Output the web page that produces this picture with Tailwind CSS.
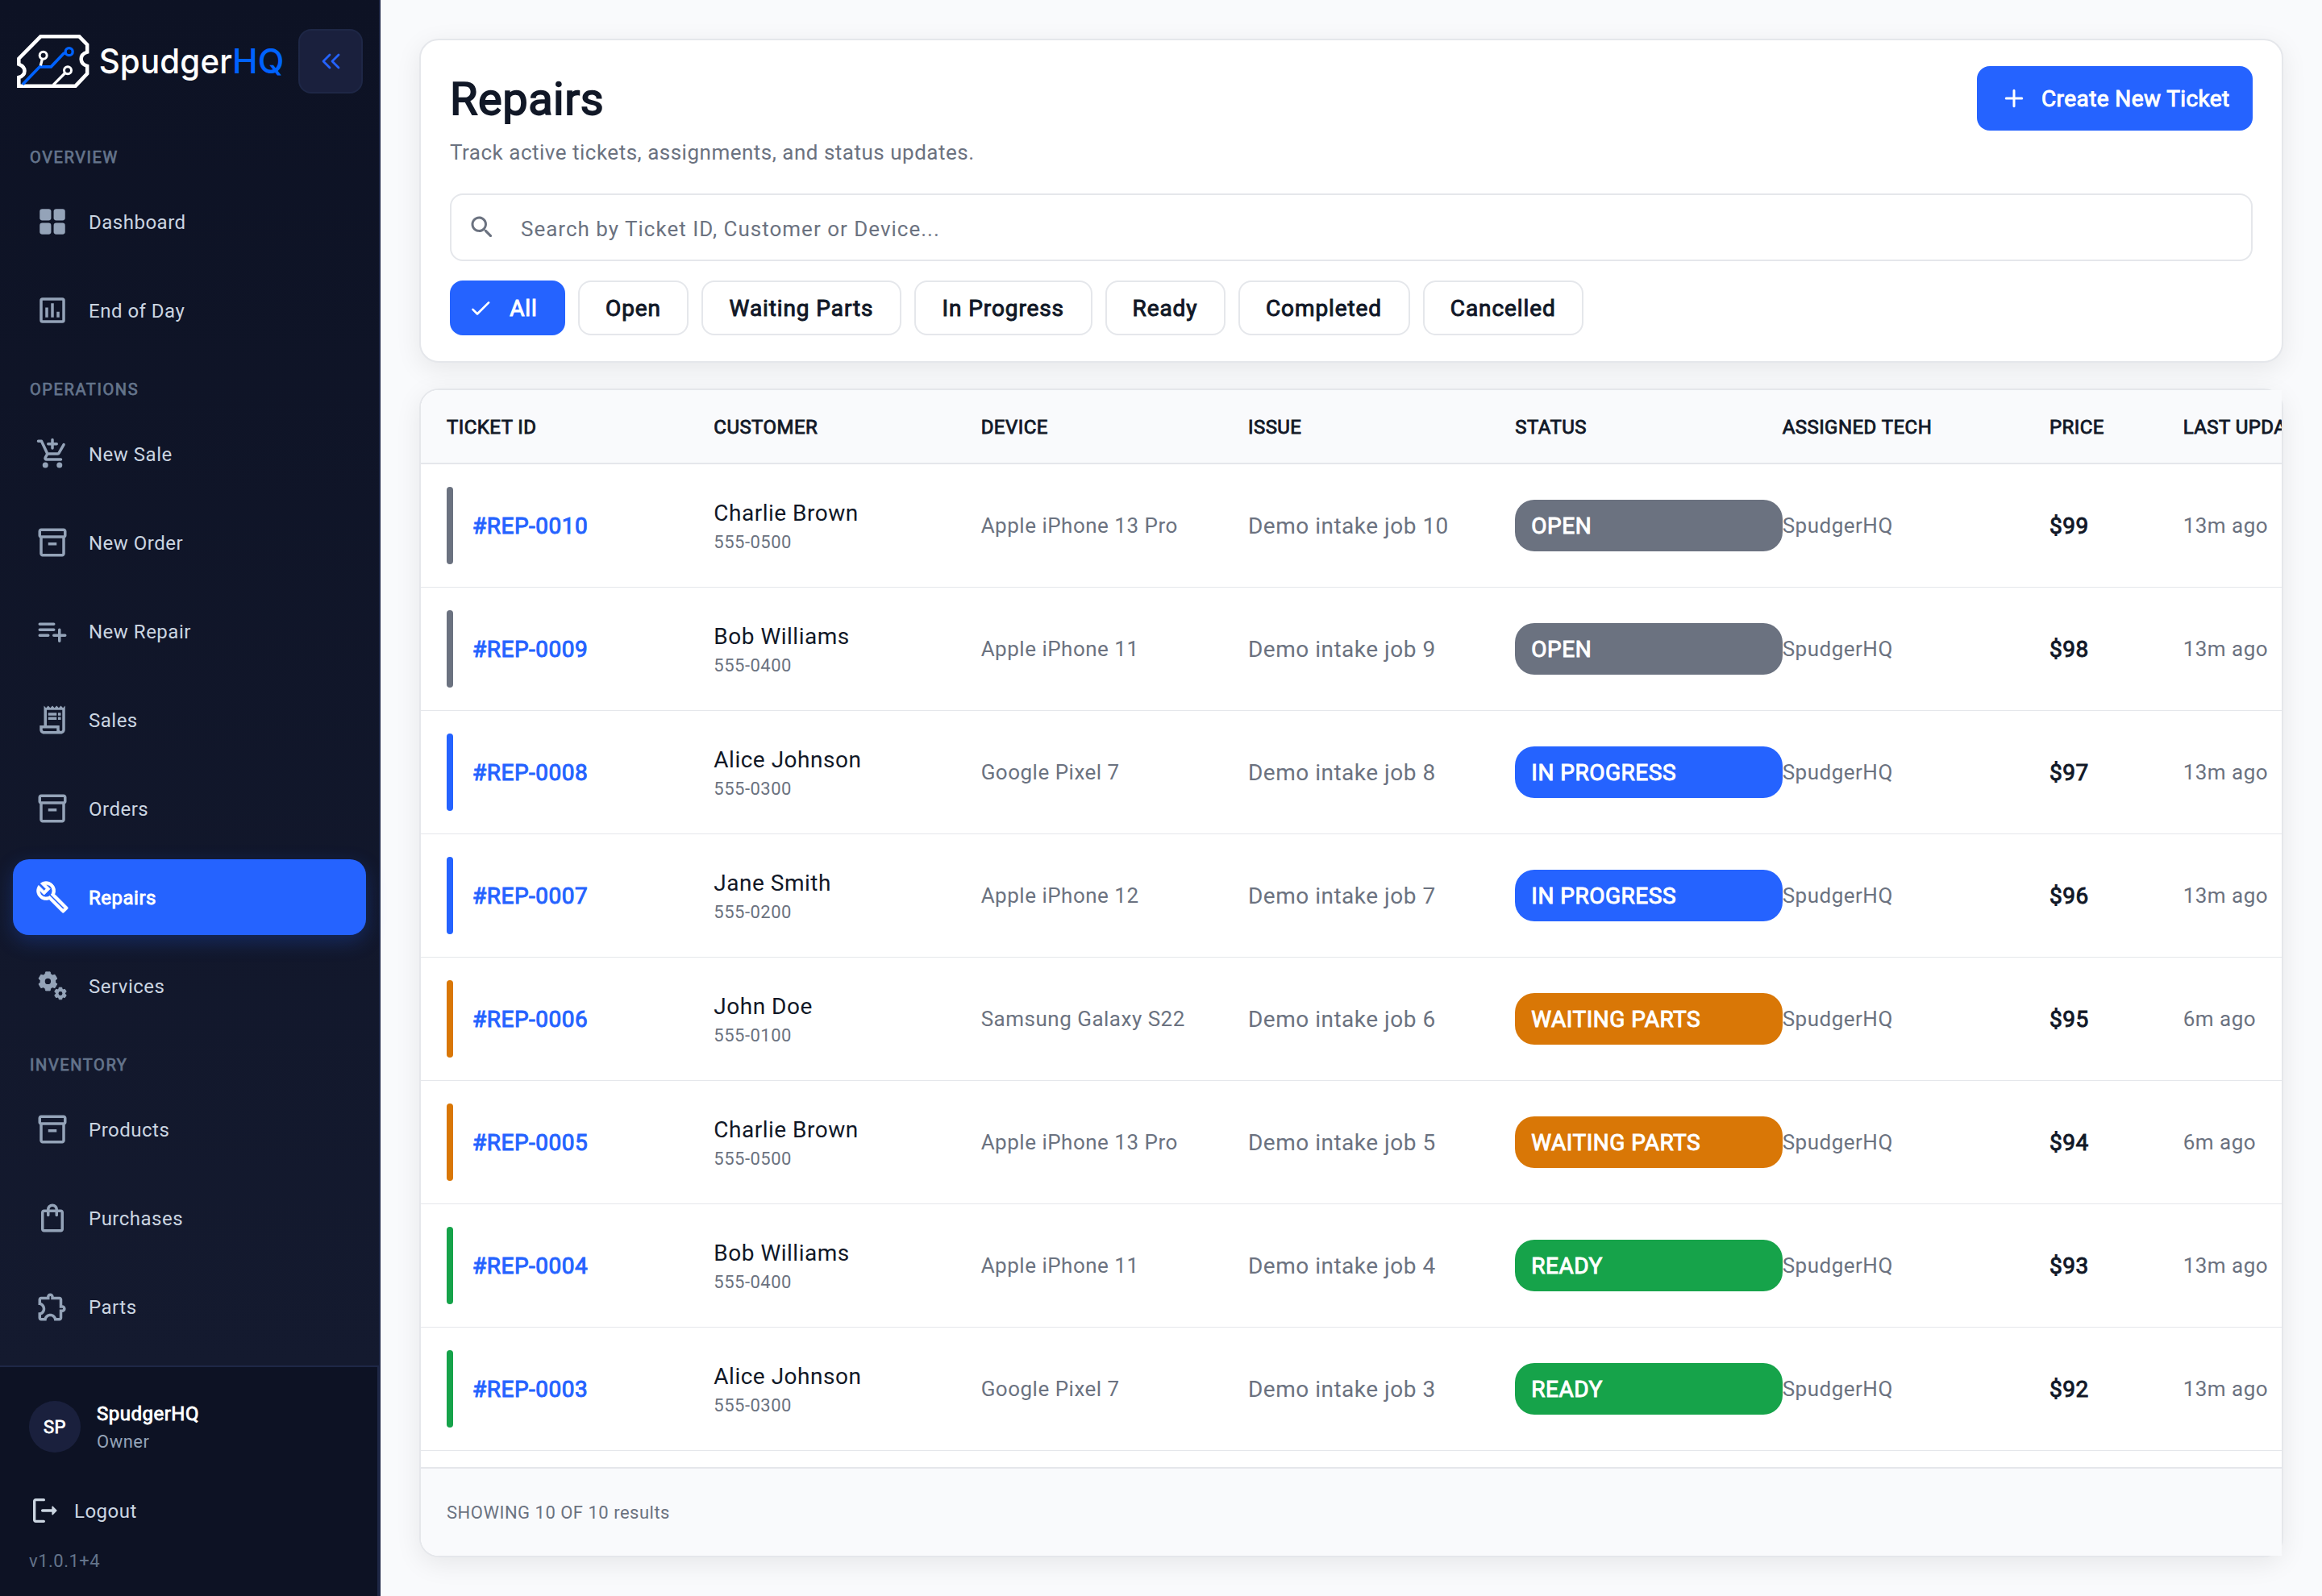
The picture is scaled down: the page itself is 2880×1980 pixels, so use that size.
<!DOCTYPE html>
<html lang="en">
<head>
<meta charset="utf-8">
<title>SpudgerHQ – Repairs</title>
<script src="https://cdn.jsdelivr.net/npm/@tailwindcss/browser@4"></script>
</head>
<body class="flex h-[1980px] w-[2880px] overflow-hidden bg-[#f9fafc] font-[Roboto,sans-serif] tracking-[0.5px] text-[#111827]">

<aside class="flex h-full w-[472px] shrink-0 flex-col border-r-2 border-[#1e2746] bg-[#0d1224]">
  <div class="flex min-h-0 flex-1 flex-col bg-linear-to-b from-[#0d1224] to-[#141a2f]">
    <div class="flex h-[152px] items-start justify-between pt-9 pr-5 pl-5">
      <svg class="mt-[3px] h-[72px] w-[334px] overflow-visible" viewBox="60 57 1002 216" fill="none">
        <path d="M151 76H295L324.500 106V134C308 139 302 148 302 160S308 181 324.500 186V214L281 260H70V228C84 224 91.500 216 91.500 204S84 185 70 179V158Z" stroke="#fff" stroke-width="13.500"/>
        <path d="M84 254L148 188.500H190L237 139L245 137" stroke="#0062ff" stroke-width="11"/>
        <circle cx="257" cy="132.500" r="13.500" stroke="#0062ff" stroke-width="10"/>
        <path d="M157 161L151 184M241 213L198 256" stroke="#fff" stroke-width="10"/>
        <circle cx="161" cy="146" r="13.500" stroke="#fff" stroke-width="9"/>
        <circle cx="252" cy="202" r="13.500" stroke="#fff" stroke-width="9"/>
        <text x="368" y="214" fill="#fff" font-family="Inter, sans-serif" font-weight="500" font-size="128" textLength="496" lengthAdjust="spacingAndGlyphs">Spudger</text>
        <text x="864" y="214" fill="#0062ff" font-family="Inter, sans-serif" font-weight="500" font-size="128" textLength="194" lengthAdjust="spacingAndGlyphs">HQ</text>
      </svg>
      <button class="flex size-20 items-center justify-center rounded-2xl border-2 border-[#1e2746] bg-[#1a203d]">
        <svg class="size-10" viewBox="0 0 40 40" fill="none" stroke="#2563ff" stroke-width="2.800" stroke-linecap="round" stroke-linejoin="round"><path d="M19 12l-8 8 8 8M30 12l-8 8 8 8"/></svg>
      </button>
    </div>
    <nav id="nav" class="flex flex-col"></nav>
  </div>

  <div class="h-[286px] border-t-2 border-r-2 border-[#1e2746] bg-[#0d1224] pt-10 pl-9">
    <div class="flex h-[68px] items-center gap-5">
      <div class="flex size-16 items-center justify-center rounded-full bg-[#1a203d] text-[22px] text-white [-webkit-text-stroke:0.8px_currentColor]">SP</div>
      <div>
        <div class="text-2xl leading-9 text-white [-webkit-text-stroke:0.87px_currentColor]">SpudgerHQ</div>
        <div class="pt-px text-[22px] leading-8 text-[#94a3b8]">Owner</div>
      </div>
    </div>
    <div class="mt-[50px] flex h-10 items-center gap-4 text-2xl text-[#cbd5e1]">
      <svg class="size-10" viewBox="0 0 24 24" fill="currentColor"><path d="M5 5h6c.55 0 1-.45 1-1s-.45-1-1-1H5c-1.1 0-2 .9-2 2v14c0 1.100.9 2 2 2h6c.55 0 1-.45 1-1s-.45-1-1-1H5V5z"/><path d="M20.650 11.650l-2.790-2.790c-.32-.32-.86-.1-.86.35V11h-7c-.55 0-1 .45-1 1s.45 1 1 1h7v1.790c0 .45.54.67.85.35l2.790-2.790c.2-.19.2-.51.010-.7z"/></svg>
      <span class="pt-0.5">Logout</span>
    </div>
    <div class="mt-[27px] text-[22px] leading-8 text-[#64748b]">v1.0.1+4</div>
  </div>
</aside>

<main class="flex min-w-0 flex-1 flex-col gap-8 p-12">
  <section class="h-[402px] rounded-3xl border-2 border-[#e5e7eb] bg-white px-9 pt-8 shadow-[0_8px_32px_rgba(0,0,0,0.08)]">
    <div class="flex items-start justify-between">
      <div>
        <h1 class="text-[56px] leading-[82px] tracking-[0.5px] [-webkit-text-stroke:1.75px_currentColor]">Repairs</h1>
        <p class="mt-2 text-[26px] leading-[34px] text-[#6b7280]">Track active tickets, assignments, and status updates.</p>
      </div>
      <button class="flex h-20 w-[342px] items-center gap-4 rounded-2xl bg-[#2563ff] pl-7 text-[28px] tracking-[0.4px] whitespace-nowrap text-white">
        <svg class="size-9 shrink-0" viewBox="0 0 24 24" fill="none" stroke="currentColor" stroke-width="2" stroke-linecap="round"><path d="M12 5.500v13M5.500 12h13"/></svg>
        <span class="pt-0.5 [-webkit-text-stroke:0.97px_currentColor]">Create New Ticket</span>
      </button>
    </div>
    <div class="mt-[34px] flex h-[84px] items-center gap-[30px] rounded-2xl border-2 border-[#e5e7eb] pl-5">
      <svg class="size-9 text-[#6b7280]" viewBox="0 0 24 24" fill="currentColor"><path d="M15.500 14h-.79l-.28-.27c1.200-1.400 1.820-3.310 1.480-5.340-.47-2.780-2.790-5-5.590-5.340-4.230-.52-7.790 3.040-7.270 7.270.34 2.800 2.560 5.120 5.340 5.590 2.030.34 3.940-.28 5.340-1.480l.27.28v.79l4.250 4.250c.41.41 1.080.41 1.490 0 .41-.41.41-1.080 0-1.490L15.500 14zm-6 0C7.010 14 5 11.990 5 9.500S7.010 5 9.500 5 14 7.010 14 9.500 11.990 14 9.500 14z"/></svg>
      <span class="pt-1 text-[26px] tracking-[1px] text-[#6b7280]">Search by Ticket ID, Customer or Device...</span>
    </div>
    <div class="mt-6 flex gap-4 text-[28px] tracking-[0.9px] [&>div]:flex [&>div]:h-[68px] [&>div]:items-center [&>div]:justify-center [&>div]:rounded-2xl [&>div]:border-2 [&>div]:border-[#e5e7eb] [&>div]:whitespace-nowrap [&_span]:pt-0.5 [&_span]:[-webkit-text-stroke:0.97px_currentColor]">
      <div class="w-[143px] gap-5 border-[#2563ff]! bg-[#2563ff] pr-3 text-white">
        <svg class="size-8 shrink-0" viewBox="0 0 24 24" fill="currentColor"><path d="M9 16.170L5.530 12.700a.996.996 0 0 0-1.410 1.410l4.180 4.180c.39.39 1.020.39 1.410 0L20.290 7.710a.996.996 0 0 0-1.410-1.410L9 16.170z"/></svg>
        <span>All</span>
      </div>
      <div class="w-[137px]"><span>Open</span></div>
      <div class="w-[248px]"><span>Waiting Parts</span></div>
      <div class="w-[220.500px]"><span>In Progress</span></div>
      <div class="w-[149px]"><span>Ready</span></div>
      <div class="w-[213px]"><span>Completed</span></div>
      <div class="w-[199.500px]"><span>Cancelled</span></div>
    </div>
  </section>

  <section class="flex min-h-0 flex-1 rounded-3xl border-2 border-[#e5e7eb] bg-white shadow-[0_8px_32px_rgba(0,0,0,0.08)]">
    <div class="flex min-w-0 flex-1 flex-col overflow-hidden rounded-l-[22px] bg-white">
      <div class="grid h-[92px] shrink-0 grid-cols-[repeat(6,331.330px)_165.670px_331.330px] items-center border-b-2 border-[#e5e7eb] bg-[#f9fafc] pt-0.5 pl-8 text-2xl tracking-[0.45px] whitespace-nowrap [-webkit-text-stroke:0.87px_currentColor]">
        <div>TICKET ID</div><div>CUSTOMER</div><div>DEVICE</div><div>ISSUE</div><div>STATUS</div><div>ASSIGNED TECH</div><div>PRICE</div><div>LAST UPDATED</div>
      </div>
      <div id="rows" class="min-h-0 flex-1 overflow-hidden"></div>
      <div class="flex h-[110px] shrink-0 items-center border-t-2 border-[#e5e7eb] bg-[#f9fafc] pl-8 text-[22px] text-[#6b7280]">SHOWING 10 OF 10 results</div>
    </div>
  </section>
</main>

<script>
const gear = (cx, cy, rIn, w, rTop, tw) =>
  `<circle cx="${cx}" cy="${cy}" r="${rIn}" fill="none" stroke="currentColor" stroke-width="${w}"/>` +
  [0, 60, 120, 180, 240, 300].map(a => `<path transform="rotate(${a} ${cx} ${cy})" d="M${cx - tw * 0.7} ${cy - rIn}L${cx - tw / 2} ${cy - rTop}H${cx + tw / 2}L${cx + tw * 0.7} ${cy - rIn}Z" stroke="currentColor" stroke-width=".5" stroke-linejoin="round"/>`).join('');
const archive = '<path fill-rule="evenodd" d="M20 2H4C3 2 2 2.900 2 4v3.010C2 7.730 2.430 8.350 3 8.700V20c0 1.100 1.100 2 2 2h14c.9 0 2-.9 2-2V8.700c.57-.35 1-.97 1-1.690V4C22 2.900 21 2 20 2zM19 20H5V9h14V20zM20 7H4V4h16V7z"/><path d="M9 12h6v2H9z"/>';
const icons = {
  grid: '<rect x="3" y="3" width="8.100" height="8.100" rx="1.800"/><rect x="12.900" y="3" width="8.100" height="8.100" rx="1.800"/><rect x="3" y="12.900" width="8.100" height="8.100" rx="1.800"/><rect x="12.900" y="12.900" width="8.100" height="8.100" rx="1.800"/>',
  chart: '<rect x="4" y="4" width="16" height="16" rx="1" fill="none" stroke="currentColor" stroke-width="2"/><path d="M7 10h2v7H7zM11 7h2v10h-2zM15 13h2v4h-2z"/>',
  cart: '<g fill="none" stroke="currentColor" stroke-width="2" stroke-linecap="round" stroke-linejoin="round"><path d="M12 2v6M9 5h6M2 3h2.250l3.900 8.350c.2.400.5.650 1 .65h6.500c.4 0 .8-.2 1-.6L20.050 5.500M8.200 12.500L7 14.600c-.4.700.1 1.400.8 1.400H18"/></g><circle cx="7" cy="20" r="2"/><circle cx="17" cy="20" r="2"/>',
  archive,
  listAdd: '<path d="M3 7h10M3 11h10M3 15h6M13 15h8M17 11v8" fill="none" stroke="currentColor" stroke-width="2" stroke-linecap="round"/>',
  receipt: '<path d="M19.500 3.500L18 2l-1.500 1.500L15 2l-1.500 1.500L12 2l-1.500 1.500L9 2 7.500 3.500 6 2v14H3v3c0 1.660 1.340 3 3 3h12c1.660 0 3-1.340 3-3V2l-1.500 1.500zM15 20H6c-.55 0-1-.45-1-1v-1h10v2zm4-1c0 .55-.45 1-1 1s-1-.45-1-1v-3H8V5h11v14z"/><path d="M9 7h6v2H9zM16 7h2v2h-2zM9 10h6v2H9zM16 10h2v2h-2z"/>',
  wrench: '<path stroke="currentColor" stroke-width=".5" d="M22.610 18.990l-9.080-9.080c.93-2.340.45-5.100-1.440-7C9.790.61 6.210.4 3.660 2.260L7.500 6.110 6.080 7.520 2.250 3.690C.39 6.230.6 9.820 2.900 12.110c1.860 1.860 4.570 2.350 6.890 1.480l9.110 9.110c.39.39 1.020.39 1.410 0l2.300-2.300c.4-.38.4-1.010 0-1.410zm-3 1.600l-9.460-9.460c-.61.45-1.290.72-2 .82-1.360.2-2.790-.21-3.830-1.250C3.370 9.760 2.930 8.500 3 7.260l3.090 3.090 4.240-4.240-3.090-3.090c1.240-.07 2.490.37 3.440 1.310 1.080 1.080 1.490 2.570 1.240 3.960-.12.71-.42 1.370-.88 1.960l9.450 9.450-.88.890z"/>',
  gears: gear(8.8, 8.8, 3.85, 3.5, 6.6, 3.2) + gear(17.7, 17.4, 2.4, 2, 4.2, 2),
  bag: '<path d="M18 6h-2c0-2.210-1.790-4-4-4S8 3.790 8 6H6c-1.100 0-2 .9-2 2v12c0 1.100.9 2 2 2h12c1.100 0 2-.9 2-2V8c0-1.100-.9-2-2-2zm-6-2c1.100 0 2 .9 2 2h-4c0-1.100.9-2 2-2zm6 16H6V8h2v2c0 .55.45 1 1 1s1-.45 1-1V8h4v2c0 .55.45 1 1 1s1-.45 1-1V8h2v12z"/>',
  puzzle: '<path d="M10.500 4.500c.28 0 .5.22.5.500v2h6v6h2c.28 0 .5.22.5.500s-.22.5-.5.500h-2v6h-2.120c-.68-1.750-2.390-3-4.380-3s-3.700 1.250-4.380 3H4v-2.120c1.750-.68 3-2.390 3-4.380 0-1.990-1.240-3.700-2.990-4.380L4 7h6V5c0-.28.22-.5.500-.5m0-2C9.120 2.500 8 3.620 8 5H4c-1.100 0-1.990.9-1.990 2v3.800h.29c1.490 0 2.700 1.210 2.700 2.700s-1.210 2.700-2.700 2.700H2V20c0 1.100.9 2 2 2h3.800v-.3c0-1.490 1.210-2.700 2.700-2.700s2.700 1.210 2.700 2.700v.3H17c1.100 0 2-.9 2-2v-4c1.380 0 2.500-1.120 2.500-2.500S20.380 11 19 11V7c0-1.100-.9-2-2-2h-4c0-1.380-1.120-2.500-2.500-2.500z"/>'
};
const sections = [
  ['OVERVIEW', [['grid', 'Dashboard'], ['chart', 'End of Day']]],
  ['OPERATIONS', [['cart', 'New Sale'], ['archive', 'New Order'], ['listAdd', 'New Repair'], ['receipt', 'Sales'], ['archive', 'Orders'], ['wrench', 'Repairs', true], ['gears', 'Services']]],
  ['INVENTORY', [['archive', 'Products'], ['bag', 'Purchases'], ['puzzle', 'Parts']]]
];
document.getElementById('nav').innerHTML = sections.map(([title, items]) => `
  <div class="h-[68px] pt-[31px] pl-[37px] text-xl leading-6 tracking-[1.6px] text-[#64748b] [-webkit-text-stroke:0.75px_currentColor]">${title}</div>
  ${items.map(([icon, label, active]) => `
  <a class="mx-4 my-2 flex h-[94px] items-center gap-6 rounded-[20px] pl-7 text-2xl ${active ? 'bg-[#2563ff] text-white shadow-[0_8px_24px_rgba(37,99,255,0.25)]' : 'text-[#cbd5e1]'}">
    <svg class="size-[42px] ${active ? 'text-white' : 'text-[#94a3b8]'}" viewBox="0 0 24 24" fill="currentColor">${icons[icon]}</svg>
    <span class="pt-0.5 ${active ? '[-webkit-text-stroke:0.87px_currentColor]' : ''}">${label}</span>
  </a>`).join('')}`).join('');

const status = {
  'OPEN': 'bg-[#6b7280]',
  'IN PROGRESS': 'bg-[#2563ff]',
  'WAITING PARTS': 'bg-[#d97706]',
  'READY': 'bg-[#16a34a]'
};
const tickets = [
  ['0010', 'Charlie Brown', '555-0500', 'Apple iPhone 13 Pro', 10, 'OPEN', 99, '13m ago'],
  ['0009', 'Bob Williams', '555-0400', 'Apple iPhone 11', 9, 'OPEN', 98, '13m ago'],
  ['0008', 'Alice Johnson', '555-0300', 'Google Pixel 7', 8, 'IN PROGRESS', 97, '13m ago'],
  ['0007', 'Jane Smith', '555-0200', 'Apple iPhone 12', 7, 'IN PROGRESS', 96, '13m ago'],
  ['0006', 'John Doe', '555-0100', 'Samsung Galaxy S22', 6, 'WAITING PARTS', 95, '6m ago'],
  ['0005', 'Charlie Brown', '555-0500', 'Apple iPhone 13 Pro', 5, 'WAITING PARTS', 94, '6m ago'],
  ['0004', 'Bob Williams', '555-0400', 'Apple iPhone 11', 4, 'READY', 93, '13m ago'],
  ['0003', 'Alice Johnson', '555-0300', 'Google Pixel 7', 3, 'READY', 92, '13m ago']
];
document.getElementById('rows').innerHTML = tickets.map(([id, name, phone, device, job, st, price, ago]) => `
  <div class="grid h-[153px] grid-cols-[repeat(6,331.330px)_165.670px_331.330px] items-center border-b border-[#e5e7eb] pl-8 text-[26px] whitespace-nowrap text-[#6b7280]">
    <div class="flex items-center gap-6 text-[28px] text-[#2563ff]"><i class="h-24 w-2 rounded-full ${status[st]}"></i><span class="pt-0.5 [-webkit-text-stroke:0.97px_currentColor]">#REP-${id}</span></div>
    <div class="pt-0.5"><div class="text-[28px] leading-10 text-[#111827]">${name}</div><div class="text-[22px] leading-8">${phone}</div></div>
    <div>${device}</div>
    <div class="pt-0.5 text-[28px]">Demo intake job ${job}</div>
    <div class="flex h-16 items-center rounded-3xl pl-5 text-[28px] text-white ${status[st]}"><span class="pt-0.5 [-webkit-text-stroke:0.97px_currentColor]">${st}</span></div>
    <div>SpudgerHQ</div>
    <div class="pt-0.5 text-[28px] text-[#111827] [-webkit-text-stroke:0.97px_currentColor]">$${price}</div>
    <div>${ago}</div>
  </div>`).join('');
</script>
</body>
</html>
